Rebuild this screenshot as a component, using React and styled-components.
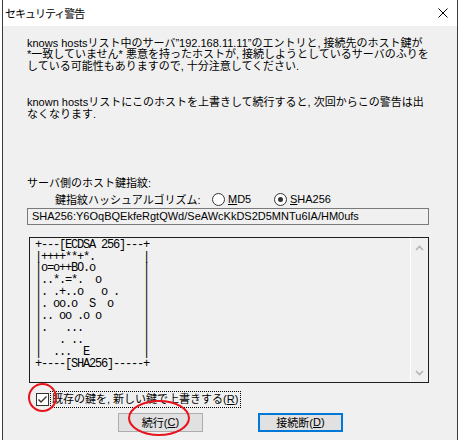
import React from "react";
import styled, { createGlobalStyle } from "styled-components";

const GlobalStyle = createGlobalStyle`
  html, body { margin: 0; padding: 0; background: #ffffff; }
  body {
    font-family: "Liberation Sans", "Noto Sans CJK JP", sans-serif;
    font-size: 11px;
    color: #000;
  }
`;

const Window = styled.div`
  position: relative;
  width: 456px;
  height: 440px;
  margin-left: 2px;
  box-sizing: border-box;
  border-left: 1px solid #3c3c3c;
  border-right: 1px solid #3c3c3c;
  background: #f0f0f0;
  display: flex;
  flex-direction: column;
  overflow: hidden;
`;

const TitleBar = styled.div`
  height: 26px;
  flex: none;
  background: #ffffff;
  display: flex;
  align-items: center;
  justify-content: space-between;
  padding: 0 9px 0 2px;
  font-size: 11px;
  letter-spacing: -1px;
`;

const Body = styled.div`
  display: flex;
  flex-direction: column;
  padding: 12px 0 0 24px;
`;

const Para = styled.p`
  margin: ${(p) => p.$top || 0}px 0 0 0;
  line-height: ${(p) => p.$lh || 11.4}px;
  white-space: nowrap;
`;

const HashRow = styled.div`
  display: flex;
  align-items: center;
  height: 13px;
  margin: 4px 0 0 28px;
  white-space: nowrap;
`;

const HashLabel = styled.span`
  width: 157px;
`;

const RadioItem = styled.label`
  display: flex;
  align-items: center;
  gap: 3px;
  width: 62px;
`;

const Radio = styled.span`
  width: 11px;
  height: 11px;
  border: 1px solid #333;
  border-radius: 50%;
  background: #fff;
  display: flex;
  align-items: center;
  justify-content: center;
  &::after {
    content: "";
    width: 5px;
    height: 5px;
    border-radius: 50%;
    background: ${(p) => (p.$on ? "#333" : "transparent")};
  }
`;

const Key = styled.span`
  text-decoration: underline;
`;

const FingerprintBox = styled.div`
  width: 402px;
  height: 17px;
  box-sizing: border-box;
  margin-top: 2px;
  border: 1px solid #7a7a7a;
  padding-left: 4px;
  display: flex;
  align-items: center;
  white-space: nowrap;
  overflow: hidden;
`;

const ArtBox = styled.div`
  width: 400px;
  height: 146px;
  box-sizing: border-box;
  margin: 12px 0 0 2px;
  border: 1px solid #1e1e1e;
  display: flex;
`;

const ArtText = styled.pre`
  flex: 1;
  margin: 0;
  padding: 2px 0 0 5px;
  font-family: "Liberation Mono", "DejaVu Sans Mono", monospace;
  font-size: 12px;
  letter-spacing: -1.2px;
  line-height: 11.9px;
`;

const ScrollBar = styled.div`
  width: 17px;
  border-left: 1px solid #ffffff;
  display: flex;
  flex-direction: column;
  justify-content: space-between;
  align-items: center;
  padding: 7px 0 6px;
`;

const CheckRow = styled.div`
  display: flex;
  align-items: center;
  gap: 2px;
  margin: 9px 0 0 9px;
  white-space: nowrap;
`;

const CheckLabel = styled.span`
  outline: 1px dotted #000;
  outline-offset: 0;
  padding: 0 2px 0 1px;
  line-height: 15px;
`;

const ButtonRow = styled.div`
  display: flex;
  gap: 55px;
  margin: 6px 0 0 91px;
`;

const Button = styled.button`
  width: 85px;
  height: 19px;
  box-sizing: border-box;
  padding: 0;
  font-family: inherit;
  font-size: 11px;
  color: #000;
  background: #e1e1e1;
  border: ${(p) => (p.$default ? "2px solid #0078d7" : "1px solid #adadad")};
  display: flex;
  align-items: center;
  justify-content: center;
`;

const Mark = styled.div`
  position: absolute;
  left: ${(p) => p.$x}px;
  top: ${(p) => p.$y}px;
  width: ${(p) => p.$w}px;
  height: ${(p) => p.$h}px;
  border: 2px solid #e8141b;
  border-radius: 50%;
  box-sizing: border-box;
  pointer-events: none;
`;

const art = [
  "+---[ECDSA 256]---+",
  "|++++**+*.        |",
  "|o=o++BO.o        |",
  "|..*.=*.  o       |",
  "|. .+..o   o .    |",
  "|. oo.o  S  o     |",
  "|.. oo .o o       |",
  "|.   ...          |",
  "|   . ..          |",
  "|  ...  E         |",
  "+----[SHA256]-----+",
].join("\n");

const Chevron = ({ up }) => (
  <svg width="9" height="6" viewBox="0 0 9 6">
    <polyline
      points={up ? "1,5 4.5,1.5 8,5" : "1,1 4.5,4.5 8,1"}
      fill="none"
      stroke="#b4b4b4"
      strokeWidth="1.6"
    />
  </svg>
);

const CheckBox = () => (
  <svg width="13" height="13" viewBox="0 0 13 13">
    <rect x="0.5" y="0.5" width="12" height="12" fill="#fff" stroke="#333" />
    <polyline points="2.5,6.5 5,9 10.5,3.5" fill="none" stroke="#333" strokeWidth="1.4" />
  </svg>
);

export default function App() {
  return (
    <>
      <GlobalStyle />
      <Window>
        <TitleBar>
          <span>セキュリティ警告</span>
          <svg width="10" height="10" viewBox="0 0 10 10">
            <path d="M0.5 0.5 L9.5 9.5 M9.5 0.5 L0.5 9.5" stroke="#000" strokeWidth="1" />
          </svg>
        </TitleBar>
        <Body>
          <Para>
            knows hostsリスト中のサーバ”192.168.11.11”のエントリと, 接続先のホスト鍵が
            <br />
            *一致していません* 悪意を持ったホストが, 接続しようとしているサーバのふりを
            <br />
            している可能性もありますので, 十分注意してください.
          </Para>
          <Para $top={25} $lh={11.7}>
            known hostsリストにこのホストを上書きして続行すると, 次回からこの警告は出
            <br />
            なくなります.
          </Para>
          <Para $top={56} $lh={12}>
            サーバ側のホスト鍵指紋:
          </Para>
          <HashRow>
            <HashLabel>鍵指紋ハッシュアルゴリズム:</HashLabel>
            <RadioItem>
              <Radio />
              <span>
                <Key>M</Key>D5
              </span>
            </RadioItem>
            <RadioItem>
              <Radio $on />
              <span>
                <Key>S</Key>HA256
              </span>
            </RadioItem>
          </HashRow>
          <FingerprintBox>SHA256:Y6OqBQEkfeRgtQWd/SeAWcKkDS2D5MNTu6IA/HM0ufs</FingerprintBox>
          <ArtBox>
            <ArtText>{art}</ArtText>
            <ScrollBar>
              <Chevron up />
              <Chevron />
            </ScrollBar>
          </ArtBox>
          <CheckRow>
            <CheckBox />
            <CheckLabel>
              既存の鍵を, 新しい鍵で上書きする(<Key>R</Key>)
            </CheckLabel>
          </CheckRow>
          <ButtonRow>
            <Button>
              続行(<Key>C</Key>)
            </Button>
            <Button $default>
              接続断(<Key>D</Key>)
            </Button>
          </ButtonRow>
        </Body>
        <Mark $x={25} $y={383} $w={29} $h={29} />
        <Mark $x={125} $y={400} $w={62} $h={36} />
      </Window>
    </>
  );
}
